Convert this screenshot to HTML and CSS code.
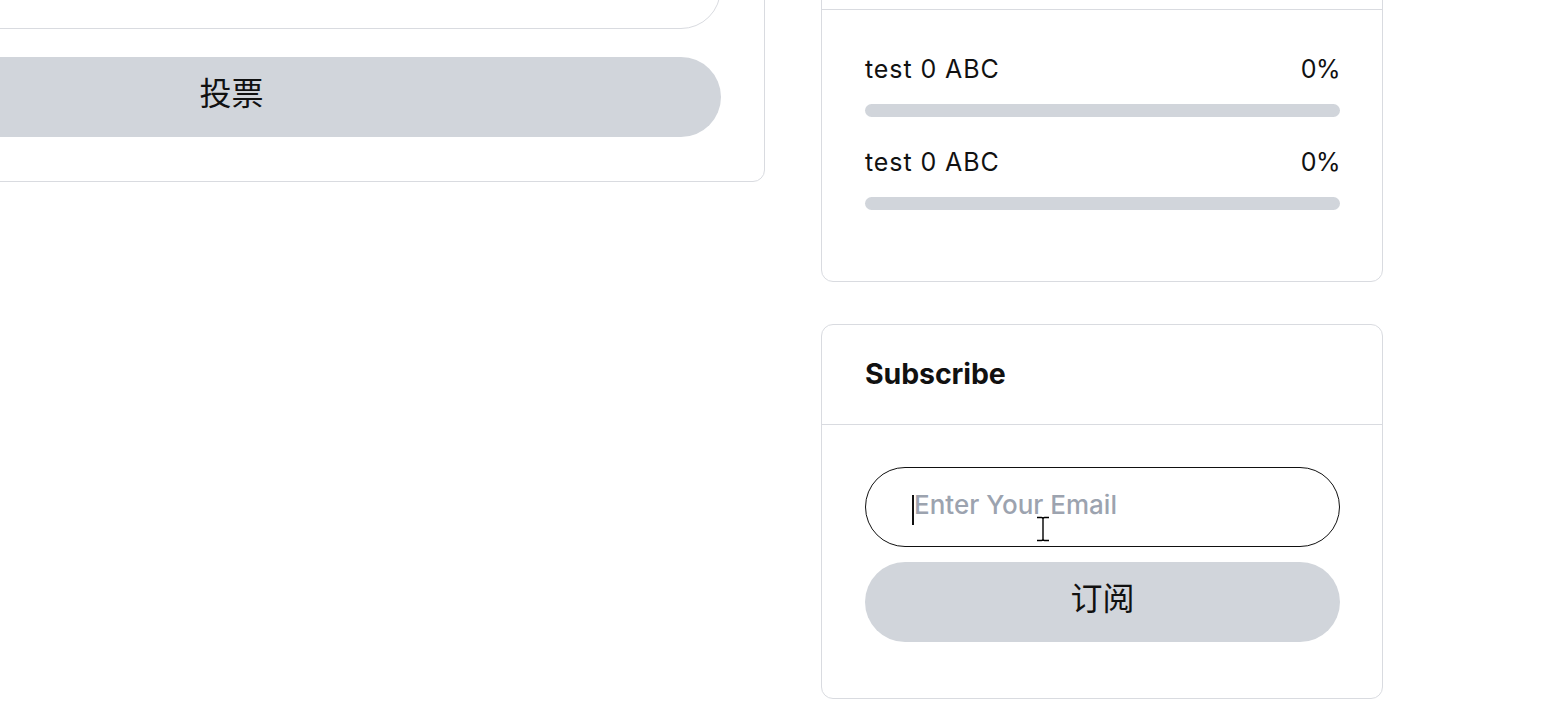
FILE: index.html
```html
<!DOCTYPE html>
<html lang="zh-CN">
<head>
<meta charset="utf-8">
<title>Poll and Subscribe</title>
<link rel="stylesheet" href="styles.css">
</head>
<body>
<div class="page">
  <div class="col-left">
    <div class="card">
      <div class="card-head"></div>
      <div class="card-body vote-body">
        <div class="pill-option"></div>
        <button class="btn" type="button">投票</button>
      </div>
    </div>
  </div>
  <div class="col-right">
    <div class="card">
      <div class="card-head"></div>
      <div class="card-body results-body">
        <div class="result">
          <div class="result-row"><span class="result-label">test 0 ABC</span><span class="result-pct">0%</span></div>
          <div class="bar"><div class="bar-fill" style="width:0%"></div></div>
        </div>
        <div class="result">
          <div class="result-row"><span class="result-label">test 0 ABC</span><span class="result-pct">0%</span></div>
          <div class="bar"><div class="bar-fill" style="width:0%"></div></div>
        </div>
      </div>
    </div>
    <div class="card">
      <div class="card-head"><h3 class="card-title">Subscribe</h3></div>
      <div class="card-body subscribe-body">
        <form class="subscribe-form">
          <div class="input-wrap">
            <input class="email-input" type="email" placeholder="Enter Your Email">
            <span class="caret"></span>
            <svg class="ibeam" width="14" height="26" viewBox="0 0 14 26" aria-hidden="true">
              <path d="M1 1.5h4.5c1 0 1.5.5 1.5 1.5v20c0 1-.5 1.5-1.5 1.5H1M13 1.5H8.5c-1 0-1.5.5-1.5 1.5v20c0 1 .5 1.5 1.5 1.5H13" fill="none" stroke="#fff" stroke-width="3"/>
              <path d="M1 1.5h4.5c1 0 1.5.5 1.5 1.5v20c0 1-.5 1.5-1.5 1.5H1M13 1.5H8.5c-1 0-1.5.5-1.5 1.5v20c0 1 .5 1.5 1.5 1.5H13" fill="none" stroke="#000" stroke-width="1.4"/>
            </svg>
          </div>
          <button class="btn" type="button">订阅</button>
        </form>
      </div>
    </div>
  </div>
</div>
</body>
</html>
```

FILE: styles.css
```css
* { box-sizing: border-box; }

html, body {
  margin: 0;
  padding: 0;
  background: #fff;
  overflow: hidden;
}

body {
  font-family: Inter, "Noto Sans CJK SC", sans-serif;
  color: #111;
}

.page {
  display: flex;
  align-items: flex-start;
  gap: 56px;
  margin-top: -91px;
  margin-left: -302px;
}

.col-left {
  width: 1067px;
  flex: none;
  margin-top: -104px;
}

.col-right {
  width: 562px;
  flex: none;
  display: flex;
  flex-direction: column;
  gap: 42px;
}

.card {
  border: 1px solid #d9dbe0;
  border-radius: 12px;
  background: #fff;
}

.card-head {
  height: 100px;
  border-bottom: 1px solid #d9dbe0;
  display: flex;
  align-items: center;
  padding: 0 43px;
}

.card-title {
  margin: 0 0 2px;
  font-size: 28.5px;
  font-weight: 700;
  line-height: 34px;
  letter-spacing: -0.1px;
  color: #111;
}

.card-body {
  padding: 43px;
}

.vote-body {
  display: flex;
  flex-direction: column;
  gap: 28px;
  padding-bottom: 44px;
}

.pill-option {
  height: 80px;
  border: 1px solid #d9dbe0;
  border-radius: 40px;
}

.btn {
  height: 80px;
  width: 100%;
  border: none;
  border-radius: 40px;
  background: #d1d5db;
  color: #111;
  font-family: "Noto Sans CJK SC", sans-serif;
  font-size: 32px;
  line-height: 1;
  padding: 0 0 13px;
  cursor: pointer;
}

.results-body {
  display: flex;
  flex-direction: column;
  gap: 30px;
  padding: 44px 42px 71px 43px;
}

.result {
  display: flex;
  flex-direction: column;
  gap: 20px;
}

.result-row {
  display: flex;
  justify-content: space-between;
  font-size: 25px;
  line-height: 30px;
  color: #111;
}

.result-label {
  letter-spacing: 0.9px;
}

.result-pct {
  letter-spacing: -0.5px;
}

.bar {
  height: 13px;
  border-radius: 7px;
  background: #d1d5db;
  overflow: hidden;
}

.bar-fill {
  height: 100%;
  background: #6b7280;
}

.subscribe-body {
  padding: 42px 42px 56px 43px;
}

.subscribe-form {
  display: flex;
  flex-direction: column;
  gap: 15px;
}

.input-wrap {
  position: relative;
}

.email-input {
  display: block;
  width: 100%;
  height: 80px;
  border: 1px solid #111;
  border-radius: 40px;
  padding: 0 20px 6px 48px;
  font-family: Inter, sans-serif;
  font-size: 26px;
  font-weight: 500;
  color: #111;
  outline: none;
  background: #fff;
}

.email-input::placeholder {
  color: #9ca3af;
}

.caret {
  position: absolute;
  left: 47px;
  top: 28px;
  width: 2px;
  height: 30px;
  background: #111;
}

.ibeam {
  position: absolute;
  left: 171px;
  top: 49px;
}
```
